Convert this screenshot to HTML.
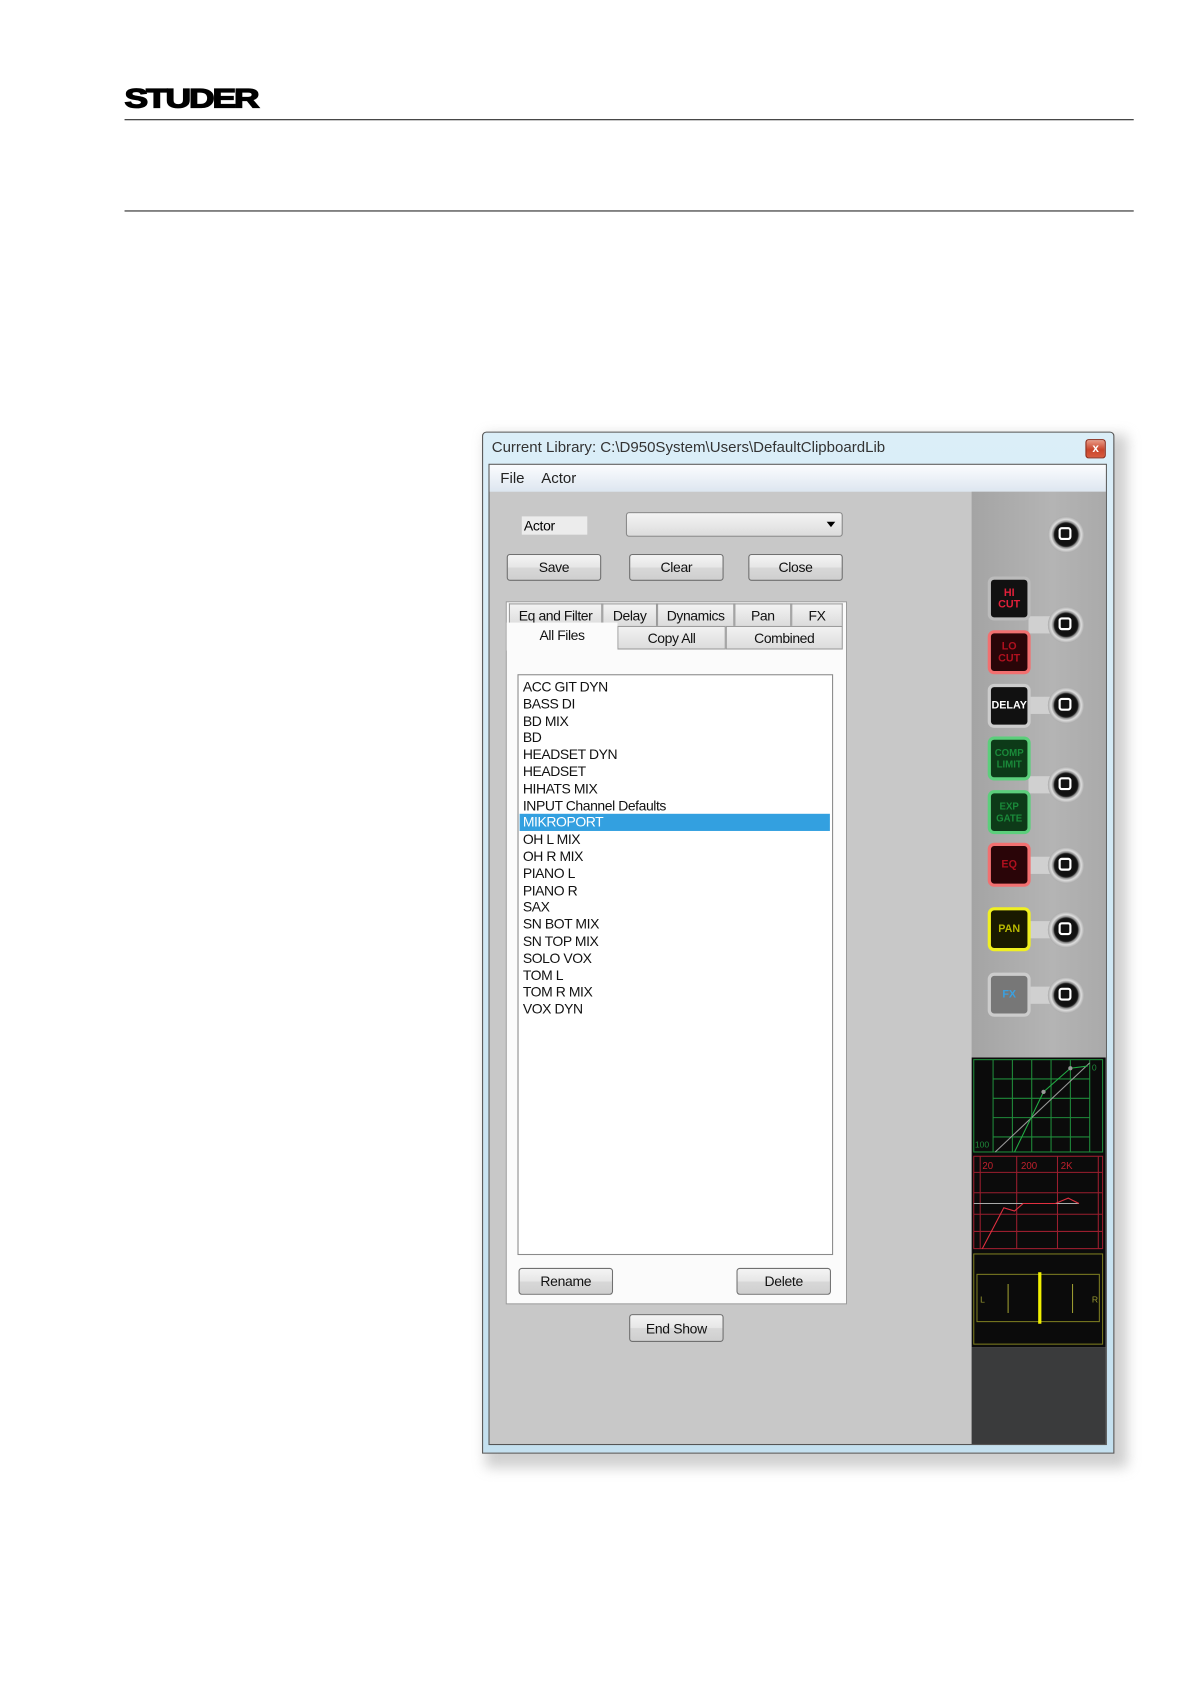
<!DOCTYPE html>
<html><head><meta charset="utf-8"><style>
html,body{margin:0;padding:0;background:#fff;width:1191px;height:1684px;overflow:hidden}
#c{position:absolute;left:0;top:0;width:1110px;height:1570px;transform:scale(1.0736);transform-origin:0 0;font-family:"Liberation Sans",sans-serif}
.a{position:absolute}
.btn{position:absolute;box-sizing:border-box;border:1px solid #707070;border-radius:3px;background:linear-gradient(#f4f4f4,#e6e6e6 50%,#d8d8d8 51%,#cfcfcf);font-size:13px;color:#111;text-align:center;display:flex;align-items:center;justify-content:center;letter-spacing:-0.3px}
.tab{position:absolute;box-sizing:border-box;border:1px solid #9a9a9a;border-bottom:none;background:linear-gradient(#f2f2f2,#dcdcdc);font-size:13px;color:#111;display:flex;align-items:center;justify-content:center;letter-spacing:-0.4px}
.knob{position:absolute;width:34px;height:34px;border-radius:50%;background:radial-gradient(circle,#111 0 10px,#222 11px,#888 12px,#ddd 14px,#aaa 17px);}
.knob:after{content:"";position:absolute;left:10px;top:10px;width:12px;height:12px;border:2px solid #fff;border-radius:3px;box-sizing:border-box}
.sb{position:absolute;left:920px;width:40px;height:41px;box-sizing:border-box;border-radius:6px;display:flex;align-items:center;justify-content:center;font-size:10px;font-weight:bold;line-height:11px;text-align:center;font-family:"Liberation Sans Narrow","Liberation Sans",sans-serif}
.list div{height:15.8px;line-height:15.8px;font-size:13px;padding-left:4px;letter-spacing:-0.4px;color:#111}
</style></head><body><div id="c">
<div class="a" style="left:116px;top:80px;font-size:25px;font-weight:900;letter-spacing:-1.5px;transform:scaleX(1.32);transform-origin:0 0;line-height:24px;-webkit-text-stroke:1.2px #000">STUDER</div>
<div class="a" style="left:116px;top:111px;width:940px;height:1px;background:#222"></div>
<div class="a" style="left:116px;top:196px;width:940px;height:1px;background:#222"></div>

<div class="a" style="left:452px;top:405px;width:598px;height:962px;background:#bbb;filter:blur(6px);opacity:.7"></div>
<div class="a" style="left:449px;top:402px;width:589px;height:952px;background:linear-gradient(#dbeef8,#c4e0ef);border:1px solid #555;box-sizing:border-box;border-radius:4px 4px 0 0"></div>
<div class="a" style="left:458px;top:408px;font-size:14px;color:#333;letter-spacing:0px">Current Library: C:\D950System\Users\DefaultClipboardLib</div>
<div class="a" style="left:1011px;top:409px;width:19px;height:18px;border:1px solid #8a2a1a;border-radius:3px;background:linear-gradient(#e99a86,#c8452c 55%,#d85a3e);box-sizing:border-box;color:#fff;font-size:11px;font-weight:bold;text-align:center;line-height:16px">x</div>
<div class="a" style="left:455px;top:432px;width:576px;height:914px;border:1px solid #555;box-sizing:border-box;background:#c8c8c8"></div>
<div class="a" style="left:456px;top:433px;width:574px;height:25px;background:linear-gradient(#fbfcfe,#dde6f0)"></div>
<div class="a" style="left:466px;top:437px;font-size:14px;color:#222">File&nbsp;&nbsp;&nbsp;&nbsp;Actor</div>

<div class="a" style="left:486px;top:481px;width:61px;height:17px;background:#ececec;font-size:13px;line-height:17px;padding-left:2px;box-sizing:border-box;letter-spacing:-0.3px">Actor</div>
<div class="a" style="left:583px;top:477px;width:202px;height:23px;border:1px solid #8a8a8a;border-radius:3px;box-sizing:border-box;background:linear-gradient(#f4f4f4,#dcdcdc)"></div>
<div class="a" style="left:770px;top:486px;width:0;height:0;border-left:4px solid transparent;border-right:4px solid transparent;border-top:5px solid #000"></div>
<div class="btn" style="left:472px;top:516px;width:88px;height:25px">Save</div>
<div class="btn" style="left:586px;top:516px;width:88px;height:25px">Clear</div>
<div class="btn" style="left:697px;top:516px;width:88px;height:25px">Close</div>

<div class="a" style="left:471px;top:560px;width:318px;height:655px;background:#fbfbfb;border:1px solid #9a9a9a;box-sizing:border-box"></div>
<div class="tab" style="left:474px;top:562px;width:87px;height:21px">Eq and Filter</div>
<div class="tab" style="left:561px;top:562px;width:51px;height:21px">Delay</div>
<div class="tab" style="left:612px;top:562px;width:72px;height:21px">Dynamics</div>
<div class="tab" style="left:684px;top:562px;width:53px;height:21px">Pan</div>
<div class="tab" style="left:737px;top:562px;width:48px;height:21px">FX</div>
<div class="tab" style="left:575px;top:583px;width:101px;height:22px;border-bottom:1px solid #9a9a9a">Copy All</div>
<div class="tab" style="left:676px;top:583px;width:109px;height:22px;border-bottom:1px solid #9a9a9a">Combined</div>
<div class="tab" style="left:472px;top:580px;width:103px;height:26px;background:#fbfbfb;border-color:#fbfbfb;align-items:flex-start;padding-top:3px">All Files</div>

<div class="a list" style="left:482px;top:628px;width:294px;height:541px;border:1px solid #8a8a8a;background:#fff;box-sizing:border-box;padding-top:3px">
<div>ACC GIT DYN</div><div>BASS DI</div><div>BD MIX</div><div>BD</div><div>HEADSET DYN</div><div>HEADSET</div><div>HIHATS MIX</div><div>INPUT Channel Defaults</div>
<div style="background:#33a0e0;color:#fff;margin:0 2px 0 1px;padding-left:3px">MIKROPORT</div>
<div>OH L MIX</div><div>OH R MIX</div><div>PIANO L</div><div>PIANO R</div><div>SAX</div><div>SN BOT MIX</div><div>SN TOP MIX</div><div>SOLO VOX</div><div>TOM L</div><div>TOM R MIX</div><div>VOX DYN</div>
</div>
<div class="btn" style="left:483px;top:1181px;width:88px;height:25px">Rename</div>
<div class="btn" style="left:686px;top:1181px;width:88px;height:25px">Delete</div>
<div class="btn" style="left:586px;top:1224px;width:88px;height:26px">End Show</div>

<div class="a" style="left:905px;top:458px;width:125px;height:797px;background:linear-gradient(90deg,#a4a4a4,#b4b4b4 60%,#aaa)"></div>
<div class="a" style="left:905px;top:1255px;width:125px;height:90px;background:#3a3b3c"></div>
<div class="a" style="left:958px;top:574px;width:24px;height:16px;background:#d0d0d0"></div>
<div class="a" style="left:958px;top:649px;width:24px;height:16px;background:#d0d0d0"></div>
<div class="a" style="left:958px;top:723px;width:24px;height:16px;background:#d0d0d0"></div>
<div class="a" style="left:958px;top:798px;width:24px;height:16px;background:#d0d0d0"></div>
<div class="a" style="left:958px;top:858px;width:24px;height:16px;background:#d0d0d0"></div>
<div class="a" style="left:958px;top:919px;width:24px;height:16px;background:#d0d0d0"></div>
<div class="knob" style="left:976px;top:481px"></div>
<div class="knob" style="left:976px;top:565px"></div>
<div class="knob" style="left:976px;top:640px"></div>
<div class="knob" style="left:976px;top:714px"></div>
<div class="knob" style="left:976px;top:789px"></div>
<div class="knob" style="left:976px;top:849px"></div>
<div class="knob" style="left:976px;top:910px"></div>
<div class="sb" style="top:537px;background:#111;border:3px solid #bbb;color:#e0203a">HI<br>CUT</div>
<div class="sb" style="top:587px;background:#2a0508;border:3px solid #f27070;color:#b0101e">LO<br>CUT</div>
<div class="sb" style="top:637px;background:#111;border:3px solid #ccc;color:#fff;font-size:10px">DELAY</div>
<div class="sb" style="top:686px;background:#0d3a18;border:3px solid #5ccf7c;color:#1a8a3a;font-size:9px">COMP<br>LIMIT</div>
<div class="sb" style="top:736px;background:#0d3a18;border:3px solid #5ccf7c;color:#1a8a3a;font-size:9px">EXP<br>GATE</div>
<div class="sb" style="top:785px;background:#2a0508;border:3px solid #f27070;color:#b0101e">EQ</div>
<div class="sb" style="top:845px;background:#1a1a00;border:3px solid #f0f020;color:#b8b800">PAN</div>
<div class="sb" style="top:906px;background:#777;border:3px solid #ccc;color:#3aa0e0">FX</div>

<svg class="a" style="left:905px;top:985px" width="125" height="270" viewBox="0 0 125 270">
<rect x="0" y="0" width="125" height="270" fill="#0b0b0b"/>
<g stroke="#1f8a3a" fill="none" stroke-width="1">
<rect x="2" y="2" width="120" height="86"/>
<path d="M20 2V88M38 2V88M56 2V88M74 2V88M92 2V88M110 2V88M20 20H110M20 38H110M20 56H110M20 74H110"/>
</g>
<path d="M22 88L110 5" stroke="#999" fill="none"/>
<path d="M40 88L67 32L92 10L108 8" stroke="#22aa44" fill="none"/>
<circle cx="67" cy="32" r="2" fill="#999"/><circle cx="92" cy="10" r="2" fill="#999"/>
<text x="3" y="84" fill="#1f8a3a" font-size="8" font-family="Liberation Sans">100</text>
<text x="112" y="12" fill="#1f8a3a" font-size="8" font-family="Liberation Sans">0</text>
<g stroke="#9a1e2e" fill="none">
<rect x="2" y="92" width="120" height="86"/>
<path d="M8 92V178M42 92V178M80 92V178M118 92V178M2 107H122M2 126H122M2 146H122M2 162H122"/>
</g>
<text x="10" y="104" fill="#c0202c" font-size="9" font-family="Liberation Sans">20</text>
<text x="46" y="104" fill="#c0202c" font-size="9" font-family="Liberation Sans">200</text>
<text x="83" y="104" fill="#c0202c" font-size="9" font-family="Liberation Sans">2K</text>
<path d="M2 136H100" stroke="#aaa"/>
<path d="M10 178L30 140L40 143L48 136L78 136L90 131L100 136" stroke="#e03040" fill="none"/>
<rect x="2" y="183" width="120" height="84" fill="none" stroke="#7a7a20"/>
<rect x="5" y="202" width="114" height="44" fill="none" stroke="#7a7a20"/>
<path d="M34 211V238M94 211V238" stroke="#9a9a30"/>
<rect x="62" y="200" width="3" height="48" fill="#f0f000"/>
<text x="8" y="228" fill="#9a9a30" font-size="8" font-family="Liberation Sans">L</text>
<text x="112" y="228" fill="#9a9a30" font-size="8" font-family="Liberation Sans">R</text>
</svg>
</div></body></html>
